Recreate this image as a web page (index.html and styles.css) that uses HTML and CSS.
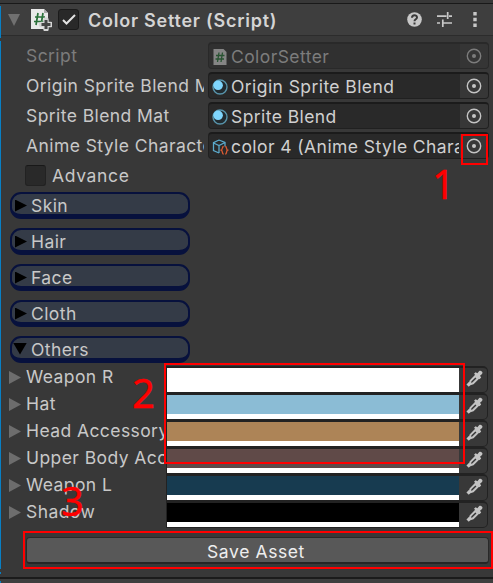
FILE: index.html
```html
<!DOCTYPE html>
<html lang="en">
<head>
<meta charset="utf-8">
<title>Color Setter</title>
<link rel="stylesheet" href="styles.css">
</head>
<body>
<svg class="defs" width="0" height="0">
  <symbol id="target" viewBox="0 0 16 16"><circle cx="8" cy="8" r="6.7" fill="none" stroke="currentColor" stroke-width="1.4"/><circle cx="8" cy="8" r="2" fill="currentColor"/></symbol>
  <symbol id="material" viewBox="0 0 16 16"><circle cx="8" cy="8" r="7" fill="#222c31" stroke="#5793aa" stroke-width="1.4"/><circle cx="6.1" cy="6.3" r="4.8" fill="#7fd6fd"/></symbol>
  <symbol id="dropper" viewBox="0 0 18 18"><path d="M8 3.8l1.6-1.6 1.8 1L13 1.2c1.8-1.6 4.6 1 3 2.9l-2 1.7 1.2 1.7-1.7 1.7z" fill="#c4c4c4"/><path d="M9.4 6l2.5 2.5-4.9 4.8-3.5 1.1 1-3.5z" fill="none" stroke="#c4c4c4" stroke-width="2"/><path d="M4 13l-2.4 2.6" stroke="#c4c4c4" stroke-width="3.2"/></symbol>
</svg>
<main class="inspector">
  <header class="header">
    <svg class="fold" width="12" height="12" viewBox="0 0 12 12"><path d="M0 0h12L6 12z" fill="#707070"/></svg>
    <svg class="script-icon" width="22" height="23" viewBox="0 0 22 23"><path d="M1 1h13l4 4v16H1z" fill="#e9e9e9"/><path d="M14 1l4 4h-4z" fill="#a9a9a9"/><path d="M8 5L6 17M13 5l-2 12M5 9h10M4 13.5h10" stroke="#297039" stroke-width="1.7"/><path d="M16 12v9M11.5 16.5h9" stroke="#d5d5d5" stroke-width="5.4" stroke-linecap="round"/><path d="M16 12v9M11.5 16.5h9" stroke="#444" stroke-width="3"/></svg>
    <span class="check"><svg width="14" height="11" viewBox="0 0 14 11"><path d="M1 6l3.5 3.5L13 1" fill="none" stroke="#e4e4e4" stroke-width="2"/></svg></span>
    <h1 class="title">Color Setter (Script)</h1>
    <svg class="help" width="15" height="15" viewBox="0 0 15 15"><circle cx="7.5" cy="7.5" r="7.3" fill="#c8c8c8"/><path d="M5 5.7C5 2.3 10 2.4 10 5.5c0 1.8-2.5 1.8-2.5 3.7M7.5 10.6v2" fill="none" stroke="#3b3b3b" stroke-width="2"/></svg>
    <svg class="preset" width="16" height="15" viewBox="0 0 16 15"><path d="M0 4.2h9.5M12 4.2h3M10.7 0v7M0 11h3M6 11h9M5.8 7.5V15" fill="none" stroke="#c8c8c8" stroke-width="1.7"/></svg>
    <svg class="kebab" width="4" height="15" viewBox="0 0 4 15"><path d="M.3 0h3.4v3.4H.3zM.3 5.8h3.4v3.4H.3zM.3 11.6h3.4V15H.3z" fill="#c8c8c8"/></svg>
  </header>

  <section class="fields">
    <div class="field disabled"><span class="label script-label">Script</span><div class="object"><svg class="obj-icon" viewBox="0 0 16 16"><path d="M1.5 0h10l3 3v13h-13z" fill="#858585"/><path d="M7 3.5L5.5 13M10.5 3.5L9 13M4 6.5h8.5M3.5 10H12" stroke="#285332" stroke-width="1.3"/></svg><span class="value v-script">ColorSetter</span><span class="pick"><svg><use href="#target"/></svg></span></div></div>
    <div class="field"><span class="label">Origin Sprite Blend Mat</span><div class="object"><svg class="obj-icon"><use href="#material"/></svg><span class="value">Origin Sprite Blend</span><span class="pick"><svg><use href="#target"/></svg></span></div></div>
    <div class="field"><span class="label">Sprite Blend Mat</span><div class="object"><svg class="obj-icon"><use href="#material"/></svg><span class="value">Sprite Blend</span><span class="pick"><svg><use href="#target"/></svg></span></div></div>
    <div class="field"><span class="label">Anime Style Character</span><div class="object"><svg class="obj-icon cube" viewBox="0 0 16 16"><path d="M7 1l6 2.5v4M7 1L1.5 3.7v7.8L7 14M1.5 4L7 6.5 13 3.5M7 6.5V14" fill="none" stroke="#5baacc" stroke-width="1.3"/><path d="M11.7 7.5c-2 0-.8 3-2.4 3.6 1.6.6.4 4 2.4 4M13.2 7.5c2 0 .8 3 2.3 3.6-1.5.6-.3 4-2.3 4" fill="none" stroke="#dc5b32" stroke-width="1.3"/></svg><span class="value">color 4 (Anime Style Character)</span><span class="pick"><svg><use href="#target"/></svg></span></div></div>
    <div class="advance"><span class="box"></span><span>Advance</span></div>
  </section>

  <nav class="groups">
    <div class="pill"><i class="right"></i>Skin</div>
    <div class="pill"><i class="right"></i>Hair</div>
    <div class="pill"><i class="right"></i>Face</div>
    <div class="pill"><i class="right"></i>Cloth</div>
    <div class="pill"><i class="down"></i>Others</div>
  </nav>

  <section class="colors">
    <div class="color"><i></i><span>Weapon R</span><div class="swatch"><b class="white"></b><svg><use href="#dropper"/></svg></div></div>
    <div class="color"><i></i><span>Hat</span><div class="swatch"><b class="sky"></b><svg><use href="#dropper"/></svg></div></div>
    <div class="color"><i></i><span>Head Accessory</span><div class="swatch"><b class="tan"></b><svg><use href="#dropper"/></svg></div></div>
    <div class="color"><i></i><span>Upper Body Accessory</span><div class="swatch"><b class="brown"></b><svg><use href="#dropper"/></svg></div></div>
    <div class="color"><i></i><span>Weapon L</span><div class="swatch"><b class="navy"></b><svg><use href="#dropper"/></svg></div></div>
    <div class="color"><i></i><span>Shadow</span><div class="swatch"><b class="black"></b><svg><use href="#dropper"/></svg></div></div>
  </section>
  <button class="save">Save Asset</button>
  <footer class="footer"></footer>

  <div class="mark edge-top"></div><div class="mark edge-body"></div><div class="mark edge-gap"></div><div class="mark edge-end"></div>
  <div class="mark frame frame-one"></div><div class="mark number one">1</div>
  <div class="mark frame frame-two"></div><div class="mark number two">2</div>
  <div class="mark frame frame-three"></div><div class="mark number three">3</div>
</main>
</body>
</html>
```
FILE: styles.css
```css
* { box-sizing: border-box; }
body { margin: 0; background: #383838; color: #c8c8c8; font: 17.5px/26px Inter, sans-serif; letter-spacing: .42px; }
svg { display: block; flex: none; }
.defs { position: absolute; }
.inspector { position: relative; width: 493px; height: 583px; overflow: hidden; padding-top: 3px; display: flex; flex-direction: column; }
.header { height: 33px; flex: none; border-top: 1px solid #191919; border-bottom: 1px solid #2c2c2c; background: #3e3e3e; display: flex; align-items: center; padding-left: 8px; }
.script-icon { margin-left: 10px; }
.check { width: 21px; height: 21px; margin-left: 6px; margin-top: -1px; background: #292929; border: 1px solid #1b1b1b; border-radius: 3px; display: grid; place-items: center; }
.title { margin: 2px 0 0 9px; font-size: 18px; font-weight: 600; line-height: 26px; letter-spacing: .75px; color: #d4d4d4; white-space: nowrap; }
.help { margin-left: auto; }
.preset { margin-left: 15px; }
.kebab { margin: 0 16px 0 20px; }
.fields { padding-top: 6px; }
.field { height: 27px; margin-bottom: 3px; display: flex; padding-left: 26px; }
.label { width: 178px; margin-right: 4px; overflow: hidden; white-space: nowrap; line-height: 28px; flex: none; }
.object { width: 281px; height: 27px; border: 1px solid #202020; border-top: 2px solid #1b1b1b; border-radius: 4px; background: #292929; display: flex; align-items: center; overflow: hidden; padding-left: 3px; }
.obj-icon { width: 16px; height: 16px; margin-top: 1px; }
.cube { overflow: visible; }
.value { width: 228px; margin-left: 3px; padding-top: 2px; overflow: hidden; white-space: nowrap; flex: none; color: #d0d0d0; }
.pick { width: 28px; height: 24px; background: #373737; margin-left: 1px; padding: 4px 0 0 6px; color: #c4c4c4; }
.pick svg { width: 16px; height: 16px; }
.disabled { color: #7c7c7c; }
.disabled .object { background: #303030; border-color: #292929; }
.disabled .value, .disabled .pick { color: #7c7c7c; }
.disabled .pick { background: #353535; }
.advance { height: 27px; display: flex; align-items: center; gap: 6px; padding-left: 25px; letter-spacing: .65px; }
.box { width: 21px; height: 21px; background: #292929; border: 1px solid #222; border-top-color: #181818; border-radius: 3px; }
.groups { display: flex; flex-direction: column; gap: 9px; padding: 3px 0 0 10px; }
.pill { width: 180px; height: 27px; border: solid #07113d; border-width: 2px 2px 5px; border-radius: 11px; background: #343b47; display: flex; align-items: center; padding: 4px 0 0 3px; line-height: 20px; }
.pill i { flex: none; margin-top: -1px; }
.right { width: 12px; height: 12px; margin-right: 4px; background: #000; clip-path: polygon(0 0, 100% 50%, 0 100%); }
.pill .down { width: 14px; height: 12px; margin: -3px 4px 0 -2px; background: #000; clip-path: polygon(0 0, 100% 0, 50% 100%); }
.colors { padding-top: 3px; }
.color { height: 27px; display: flex; align-items: flex-start; padding-left: 9px; }
.color > i { width: 12px; height: 13px; margin: 5px 5px 0 0; background: #6d6d6d; clip-path: polygon(0 0, 100% 50%, 0 100%); flex: none; }
.color > span { width: 140px; overflow: hidden; white-space: nowrap; line-height: 22px; }
.swatch { width: 322px; height: 27px; border: 1px solid #222; border-top-width: 2px; border-radius: 0 5px 5px 0; display: flex; }
.swatch b { width: 292px; height: 24px; border-bottom: 5px solid #fff; }
.swatch svg { width: 18px; height: 18px; margin: 2px 0 0 7px; }
.white { background: #fff; }
.sky { background: #8bbcd5; }
.tan { background: #ad8457; }
.brown { background: #604a48; }
.navy { background: #173b50; }
.black { background: #000; }
.save { width: 463px; height: 27px; flex: none; margin: 9px 0 0 26px; padding: 2px 3px 0 0; background: #585858; border: 1px solid #292929; border-bottom: 2px solid #252525; border-radius: 4px; color: #eee; font: 17.5px/24px Inter, sans-serif; letter-spacing: .6px; }
.footer { height: 20px; margin-top: 13px; border-top: 2px solid #1b1b1b; background: #3e3e3e; }
.mark { position: absolute; }
.edge-top, .edge-body, .edge-gap, .edge-end { left: 0; width: 1px; background: #087fc4; }
.edge-top { top: 6px; height: 32px; }
.edge-body { top: 41px; height: 528px; }
.edge-gap { top: 572px; height: 2px; }
.edge-end { top: 581px; height: 2px; }
.frame { border: 2px solid #f00; }
.frame-one { left: 461px; top: 134px; width: 27px; height: 31px; }
.frame-two { left: 164px; top: 363px; width: 301px; height: 101px; }
.frame-three { left: 23px; top: 531px; width: 470px; height: 38px; }
.number { color: #f00; font: 40px/40px "Noto Sans", sans-serif; letter-spacing: 0; -webkit-text-stroke: .4px #f00; }
.one { left: 432px; top: 164px; }
.two { left: 132px; top: 373px; }
.three { left: 61px; top: 481px; }
```
